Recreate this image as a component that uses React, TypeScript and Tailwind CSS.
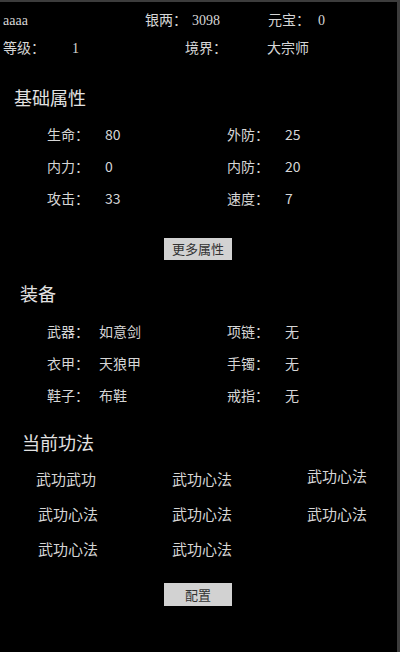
import React from "react";

const stats = [
  ["生命：", "80", "外防：", "25"],
  ["内力：", "0", "内防：", "20"],
  ["攻击：", "33", "速度：", "7"],
];

const equips = [
  ["武器：", "如意剑", "项链：", "无"],
  ["衣甲：", "天狼甲", "手镯：", "无"],
  ["鞋子：", "布鞋", "戒指：", "无"],
];

export default function App() {
  return (
    <div
      className="w-[400px] h-[652px] bg-black border-t-2 border-r-[3px] border-[#3c3c3c] text-[#d6d6d6] overflow-hidden"
      style={{ fontFamily: '"Noto Sans CJK SC", "Noto Sans", sans-serif' }}
    >
      <div className="pt-[4px] text-[14px]" style={{ fontFamily: '"Liberation Serif", "Noto Sans CJK SC", serif' }}>
        <div className="flex h-[28px] items-center">
          <span className="w-[145px] pl-[3px]">aaaa</span>
          <span className="w-[47px]">银两：</span>
          <span className="w-[76px]">3098</span>
          <span className="w-[50px]">元宝：</span>
          <span>0</span>
        </div>
        <div className="flex h-[28px] items-center">
          <span className="w-[72px] pl-[3px]">等级：</span>
          <span className="w-[113px]">1</span>
          <span className="w-[82px]">境界：</span>
          <span>大宗师</span>
        </div>
      </div>

      <div className="mt-[21px] h-[28px] flex items-center pl-[14px] text-[18px] text-[#e2e2e2]">基础属性</div>
      <div className="mt-[7px] text-[14px]">
        {stats.map((r, i) => (
          <div key={i} className="flex h-[32px] items-center pl-[47px]">
            <span className="w-[58px]">{r[0]}</span>
            <span className="w-[122px]">{r[1]}</span>
            <span className="w-[58px]">{r[2]}</span>
            <span>{r[3]}</span>
          </div>
        ))}
      </div>
      <div className="mt-[24px] flex pl-[164px]">
        <button className="w-[68px] h-[22px] bg-[#d2d2d2] text-[#333] text-[13px] flex items-center justify-center">
          更多属性
        </button>
      </div>

      <div className="mt-[19px] h-[28px] flex items-center pl-[20px] text-[18px] text-[#e2e2e2]">装备</div>
      <div className="mt-[8px] text-[14px]">
        {equips.map((r, i) => (
          <div key={i} className="flex h-[32px] items-center pl-[47px]">
            <span className="w-[52px]">{r[0]}</span>
            <span className="w-[128px]">{r[1]}</span>
            <span className="w-[58px]">{r[2]}</span>
            <span>{r[3]}</span>
          </div>
        ))}
      </div>

      <div className="mt-[17px] h-[28px] flex items-center pl-[22px] text-[18px] text-[#e2e2e2]">当前功法</div>
      <div className="mt-[6px] text-[15px]">
        <div className="flex h-[35px] items-center">
          <span className="w-[172px] pl-[36px]">武功武功</span>
          <span className="w-[135px]">武功心法</span>
          <span className="-mt-[6px]">武功心法</span>
        </div>
        <div className="flex h-[35px] items-center">
          <span className="w-[172px] pl-[38px]">武功心法</span>
          <span className="w-[135px]">武功心法</span>
          <span>武功心法</span>
        </div>
        <div className="flex h-[35px] items-center">
          <span className="w-[172px] pl-[38px]">武功心法</span>
          <span className="w-[135px]">武功心法</span>
        </div>
      </div>
      <div className="mt-[16px] flex pl-[164px]">
        <button className="w-[68px] h-[23px] bg-[#d2d2d2] text-[#333] text-[13px] flex items-center justify-center">
          配置
        </button>
      </div>
    </div>
  );
}
